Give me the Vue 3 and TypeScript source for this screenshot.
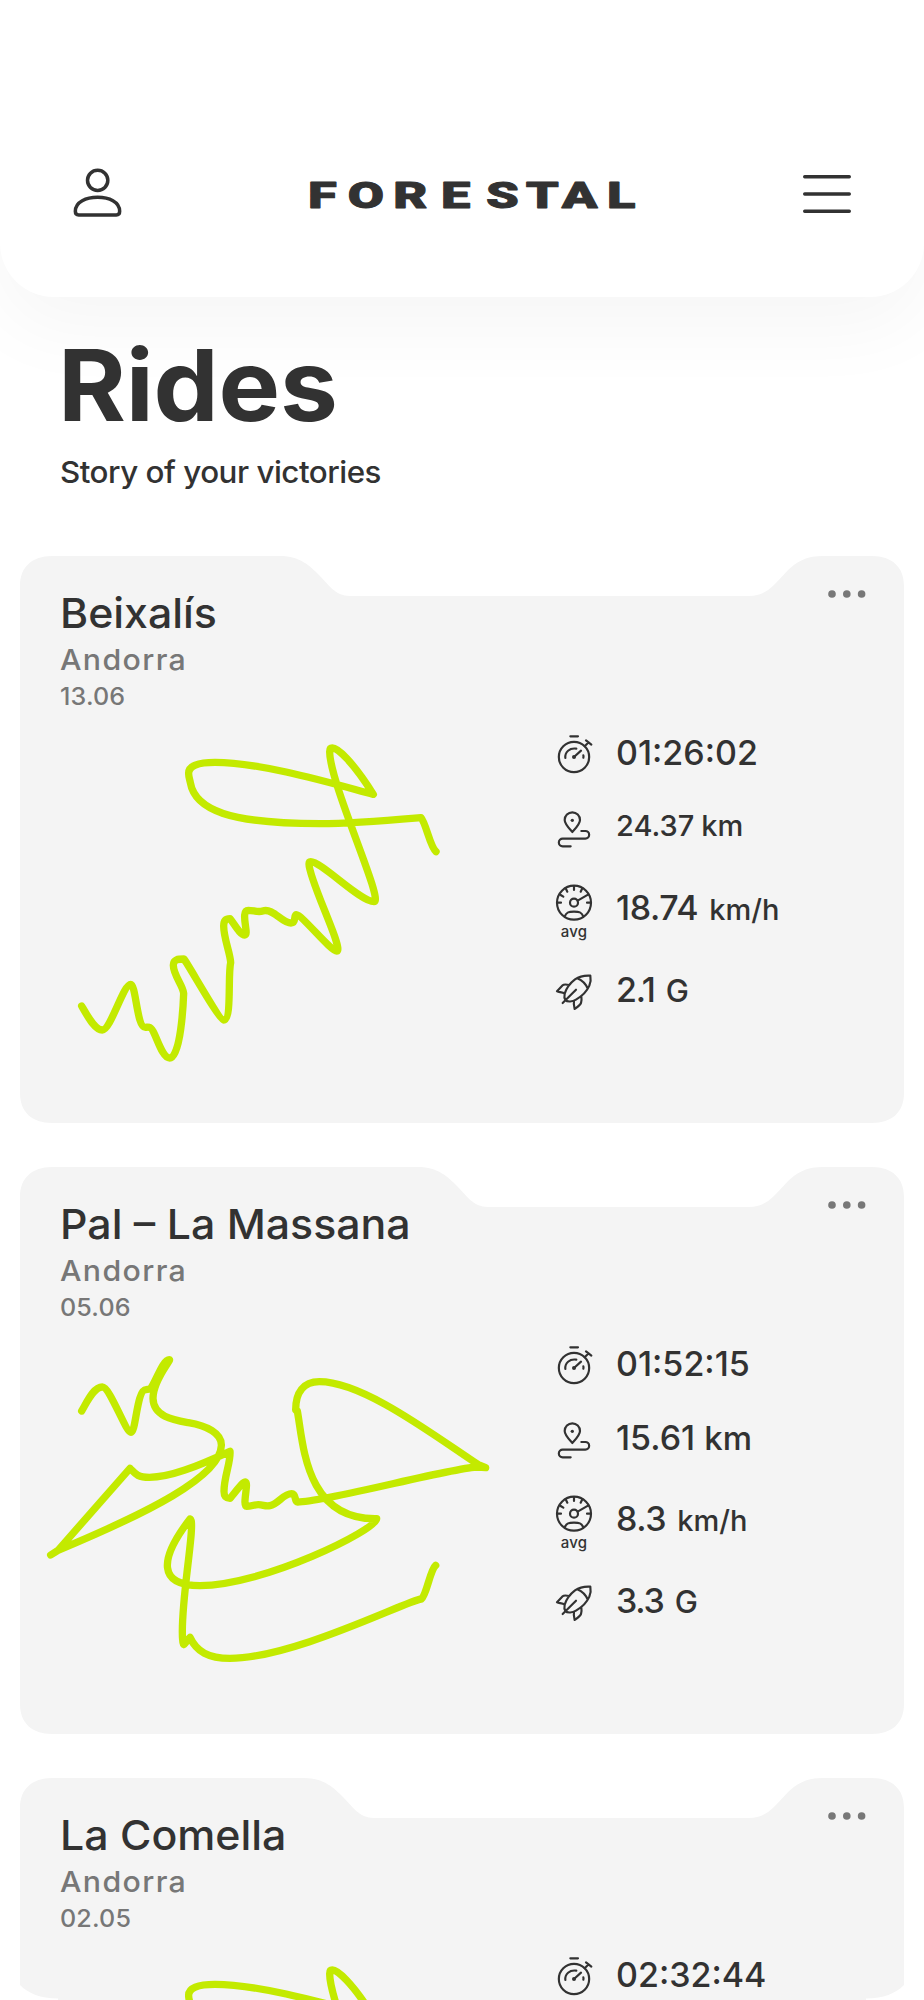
<script setup lang="ts">
type StatKind = 'time' | 'distance' | 'speed' | 'force'

interface Stat {
  kind: StatKind
  value: string
  unit?: string
  compact?: boolean
}

interface Ride {
  name: string
  country: string
  date: string
  notch: number
  track: 'ridge' | 'loops'
  stats: Stat[]
}

const rides: Ride[] = [
  {
    name: 'Beixalís',
    country: 'Andorra',
    date: '13.06',
    notch: 0,
    track: 'ridge',
    stats: [
      { kind: 'time', value: '01:26:02' },
      { kind: 'distance', value: '24.37', unit: 'km', compact: true },
      { kind: 'speed', value: '18.74', unit: 'km/h' },
      { kind: 'force', value: '2.1', unit: 'G' },
    ],
  },
  {
    name: 'Pal – La Massana',
    country: 'Andorra',
    date: '05.06',
    notch: 138,
    track: 'loops',
    stats: [
      { kind: 'time', value: '01:52:15' },
      { kind: 'distance', value: '15.61', unit: 'km' },
      { kind: 'speed', value: '8.3', unit: 'km/h' },
      { kind: 'force', value: '3.3', unit: 'G' },
    ],
  },
  {
    name: 'La Comella',
    country: 'Andorra',
    date: '02.05',
    notch: 24,
    track: 'ridge',
    stats: [{ kind: 'time', value: '02:32:44' }],
  },
]

const tracks = {
  ridge: {
    viewBox: '0 0 1320 1140',
    d: 'M125 858C145 893 165 930 187 930C212 930 250 793 272 793C288 793 290 922 316 922C320 922 324 921 328 922C345 924 362 1014 389 1014C422 1014 430 850 431 820C428 795 400 765 400 736C400 717 415 717 432 717C450 742 538 900 551 900C576 900 563 765 572 728C571 700 551 655 551 618C551 602 558 596 570 596C582 610 600 645 614 645C625 644 612 610 614 585C615 573 620 571 625 571C640 571 655 578 668 573C700 563 725 609 753 609C770 609 760 585 769 584C785 584 872 693 890 693C914 693 807 480 807 432C807 427 808 425 812 425C845 425 960 545 1002 545C1034 545 869 190 869 95C869 87 872 84 877 84C892 84 935 120 1000 223C900 197 670 127 525 127C475 127 444 137 446 162C446 172 450 180 451 188C465 270 570 311 840 311C940 311 1040 302 1143 293C1158 310 1170 380 1188 395',
  },
  loops: {
    viewBox: '0 0 1500 1080',
    d: 'M155 243C170 218 190 171 217 171C240 171 287 307 303 307C318 307 320 179 348 179L361 177C378 155 398 89 418 89C425 89 369 150 369 205C370 260 430 270 475 278C530 287 576 310 574 347C572 440 350 550 84 661L62 675L84 661L300 415C315 430 320 442 358 442C420 442 500 410 600 364C603 395 582 440 582 484C582 499 586 505 600 505C615 490 635 456 647 456C656 460 636 529 650 529C665 529 670 524 685 524C700 524 705 530 720 527C745 522 760 491 785 491C800 491 792 516 803 516C890 516 1270 411 1345 411L1367 413L1345 404C1210 315 1000 155 868 155C820 155 797 187 797 240L802 243C820 340 825 570 1040 566C1040 600 700 767 510 767C385 767 385 690 480 567C500 570 448 830 458 930C459 960 466 935 480 922C500 965 535 985 600 985C790 985 1130 812 1174 807C1190 795 1200 720 1217 706',
  },
}

const cardShape = (notch: number): string => {
  const a = 260 + notch
  return `M0 30C0 11 12 0 32 0H${a}C${a + 20} 0 ${a + 30} 10 ${a + 39} 19C${a + 48} 28 ${a + 55} 40 ${a + 70} 40H729C746 40 754 29 763 19.5C771 11 781 0 802 0H852C872 0 884 11 884 30V537C884 556 872 567 852 567H32C12 567 0 556 0 537Z`
}
</script>

<template>
  <div class="screen">
    <header class="topbar">
      <svg class="user" viewBox="38 52 150 150" aria-label="Profile">
        <circle cx="112" cy="89" r="30.5" />
        <path d="M45 182C45 153 78 140 112 140S178 153 178 182C178 190 175 193 168 193H55C48 193 45 190 45 182Z" />
      </svg>
      <svg class="logo" viewBox="0 0 328 30" role="img" aria-label="Forestal">
        <text transform="scale(1.42 1)" x="-0.8 27.3 59.3 93 124.6 152.6 178 209.8" y="28">FORESTAL</text>
      </svg>
      <svg class="menu" viewBox="0 0 48 40" aria-label="Menu">
        <path d="M1.7 2.7H46.3M1.7 20H46.3M1.7 37.3H46.3" />
      </svg>
    </header>

    <section class="intro">
      <h1>Rides</h1>
      <p>Story of your victories</p>
    </section>

    <main class="rides">
      <article v-for="ride in rides" :key="ride.name" class="ride">
        <svg class="shape" viewBox="0 0 884 567"><path :d="cardShape(ride.notch)" /></svg>
        <svg class="more" viewBox="0 0 38 8" aria-label="More">
          <circle cx="4" cy="4" r="3.8" /><circle cx="18.8" cy="4" r="3.8" /><circle cx="33.6" cy="4" r="3.8" />
        </svg>
        <div class="head">
          <h2>{{ ride.name }}</h2>
          <div class="country">{{ ride.country }}</div>
          <div class="date">{{ ride.date }}</div>
        </div>
        <svg class="track" :class="ride.track" :viewBox="tracks[ride.track].viewBox">
          <path :d="tracks[ride.track].d" />
        </svg>
        <div class="stats">
          <div v-for="stat in ride.stats" :key="stat.kind" class="stat" :class="[stat.kind, { compact: stat.compact }]">
            <div class="icon">
              <svg v-if="stat.kind === 'time'" viewBox="72 70 120 126">
                <circle cx="132" cy="142" r="45.5" />
                <path d="M121 80H144M164 110L176 98M168 92L184 105M106 145C104 127 119 114 139 117M132 142L153 123M160 137Q161 140 160 144" />
                <circle class="dot" cx="132" cy="142" r="6" />
              </svg>
              <svg v-else-if="stat.kind === 'distance'" viewBox="72 296 120 126">
                <path d="M127 365C116 353 104 341 104 329A23 23 0 0 1 150 329C150 341 138 353 127 365ZM154 362H166A11.5 11.5 0 0 1 166 385H98A11.5 11.5 0 0 0 98 408H122" />
                <circle class="dot" cx="127" cy="330" r="5" />
              </svg>
              <svg v-else-if="stat.kind === 'speed'" viewBox="72 520 120 120">
                <circle cx="132" cy="579" r="51" /><circle cx="132" cy="579" r="12" />
                <path d="M143 573L174 555M132 530V541M107 536L112 546M157 536L152 546M92 556L100 561M83 579H93M171 579H181M104 620C110 607 116 606 132 606S154 607 160 620" />
              </svg>
              <svg v-else viewBox="72 787 120 120">
                <path d="M181 798C165 797 148 800 135 809C118 822 107 842 104 852C102 862 104 868 106 871C112 878 128 876 138 870C155 860 172 842 178 828C182 818 183 808 181 798ZM142 806C156 812 168 824 173 837M117 826C108 824 100 825 98 827L81 845C88 848 98 847 104 852M132 874C130 883 132 890 134 898C142 892 150 887 153 880C155 872 155 866 154 860M138 840L98 880" />
              </svg>
              <span v-if="stat.kind === 'speed'" class="avg">avg</span>
            </div>
            <div class="value">{{ stat.value }}<span v-if="stat.unit" class="unit">{{ stat.unit }}</span></div>
          </div>
        </div>
      </article>
    </main>
    <svg class="corners" viewBox="0 0 924 16">
      <path d="M0 0H20C29 9 40 13 58 13.6V16H0ZM924 0H904C895 9 884 13 866 13.6V16H924Z" />
    </svg>
  </div>
</template>

<style>
html,
body {
  background: #fff;
}
</style>

<style scoped>
.screen {
  position: relative;
  width: 924px;
  height: 2000px;
  overflow: hidden;
  background: #fff;
  color: #323232;
  font-family: Inter, 'Liberation Sans', sans-serif;
}
svg {
  display: block;
  overflow: visible;
  fill: none;
  stroke: #323232;
  stroke-linecap: round;
  stroke-linejoin: round;
}
.topbar {
  box-sizing: border-box;
  display: flex;
  align-items: flex-start;
  justify-content: space-between;
  height: 297px;
  padding: 167px 73px 0 72.5px;
  border-radius: 0 0 54px 54px;
  background: #fff;
  box-shadow: 0 30px 80px rgba(0, 0, 0, 0.04);
}
.user {
  width: 50px;
  height: 50px;
  margin-top: 0.7px;
  stroke-width: 10.5;
}
.logo {
  width: 328px;
  height: 30px;
  margin: 13px 0 0 20px;
}
.logo text {
  font: 900 37px Roboto, sans-serif;
  fill: #323232;
  stroke-width: 0.9;
}
.menu {
  width: 48px;
  height: 40px;
  margin-top: 7px;
  stroke-width: 3.4;
}
.intro {
  height: 259px;
  padding-left: 60px;
  box-sizing: border-box;
  padding-top: 33px;
}
/* wide letterforms: headings are stretched slightly along x */
h1,
.intro p,
h2,
.country,
.date {
  transform: scaleX(1.045);
  transform-origin: 0 0;
}
h1 {
  margin: 0 0 0 -2px;
  font-size: 99px;
  line-height: 110px;
  font-weight: 700;
  letter-spacing: -0.2px;
}
.intro p {
  margin: 16px 0 0 -0.5px;
  font-size: 30px;
  line-height: 32px;
  font-weight: 500;
  letter-spacing: -0.48px;
}
.rides {
  display: flex;
  flex-direction: column;
  gap: 44px;
  padding: 0 20px;
}
.ride {
  position: relative;
  flex: none;
  display: grid;
  grid-template-columns: 534px 1fr;
  grid-template-rows: 177.3px 1fr;
  height: 567px;
}
.shape {
  position: absolute;
  inset: 0;
  width: 884px;
  height: 567px;
  fill: #f4f4f4;
  stroke: none;
}
.more {
  position: absolute;
  top: 34px;
  right: 38px;
  width: 38px;
  height: 8px;
  fill: #777;
  stroke: none;
}
.head {
  position: relative;
  grid-column: 1 / 3;
  padding: 32px 40px 0 39.5px;
}
h2 {
  margin: 0;
  font-size: 41px;
  line-height: 50px;
  font-weight: 500;
}
.country {
  font-size: 29px;
  line-height: 44px;
  font-weight: 500;
  letter-spacing: 1.3px;
  color: #777;
}
.date {
  font-size: 24px;
  line-height: 30px;
  font-weight: 500;
  letter-spacing: 0.15px;
  color: #777;
}
.track {
  position: relative;
  stroke: #c3ea00;
  stroke-width: 22;
}
.ridge {
  width: 440px;
  height: 380px;
  margin: -13.3px 0 0 20px;
}
.loops {
  width: 500px;
  height: 360px;
  margin: -14px 0 0 10px;
}
.stats {
  position: relative;
}
.stat {
  display: flex;
  align-items: flex-start;
  height: 75.4px;
}
.distance {
  height: 74.6px;
}
.speed {
  height: 89px;
}
.icon {
  width: 40px;
  margin-right: 22px;
  flex: none;
}
.icon svg {
  width: 40px;
  stroke-width: 6.5;
}
.icon .dot {
  fill: #323232;
  stroke: none;
}
.avg {
  display: block;
  font-size: 15px;
  line-height: 18px;
  text-align: center;
  font-weight: 500;
  letter-spacing: 0.2px;
}
.value {
  font-size: 34px;
  line-height: 39px;
  font-weight: 500;
  white-space: nowrap;
}
.unit {
  margin-left: 11px;
  font-size: 29px;
  line-height: 1;
}
.distance .value {
  line-height: 35px;
}
.distance .unit {
  margin-left: 9px;
  font-size: 33px;
}
.compact .value {
  font-size: 29px;
  line-height: 33px;
}
.compact .unit {
  margin-left: 7px;
  font-size: 29px;
}
.speed .value {
  line-height: 50px;
  font-weight: 550;
  letter-spacing: -0.4px;
}
.speed .unit {
  font-weight: 500;
  letter-spacing: 0;
}
.force .value {
  line-height: 35px;
  letter-spacing: -1.2px;
}
.force .unit {
  font-size: 31px;
}
.corners {
  position: absolute;
  left: 0;
  bottom: -1px;
  width: 924px;
  height: 16px;
  fill: #fff;
  stroke: none;
}
</style>
